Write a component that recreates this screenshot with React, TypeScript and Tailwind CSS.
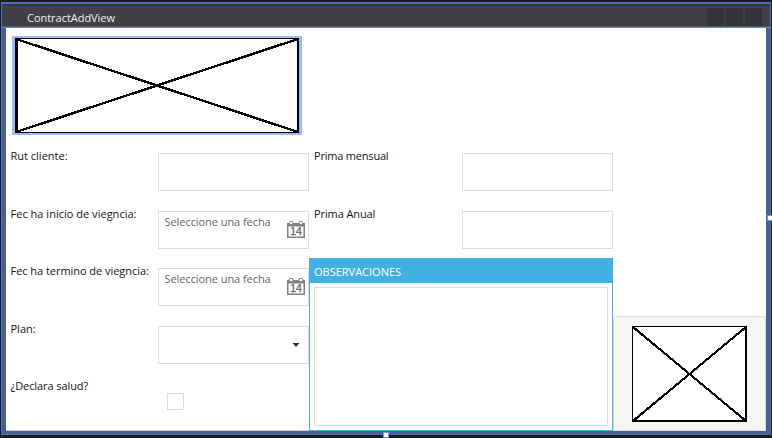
import type { ReactNode } from "react";

function Label({ children, className = "pl-[4.5px]" }: { children: ReactNode; className?: string }) {
  return (
    <div className={`pt-[5px] text-[11px] leading-[15px] whitespace-nowrap text-[#141414] ${className}`}>
      {children}
    </div>
  );
}

function Field({ children }: { children?: ReactNode }) {
  return (
    <div className="mt-[10px] flex h-[38px] w-[151px] justify-between border border-[#dddddd] bg-white">
      {children}
    </div>
  );
}

function CalendarIcon() {
  return (
    <svg width="18" height="18" viewBox="0 0 18 18" className="mt-[9px] mr-[3px] shrink-0">
      <path d="M.75 4V16.25H17.25V4" fill="white" stroke="#808080" strokeWidth="1.5" />
      <path d="M0 2H18V5.5H0Z" fill="#808080" />
      <rect x="2.5" y=".5" width="3.5" height="3" rx="1" fill="white" stroke="#808080" />
      <rect x="12" y=".5" width="3.5" height="3" rx="1" fill="white" stroke="#808080" />
      <text x="9" y="14.2" textAnchor="middle" fontSize="10.5" fill="#666666" stroke="#666666" strokeWidth=".3" fontFamily="Liberation Sans, sans-serif">14</text>
    </svg>
  );
}

function DateField() {
  return (
    <Field>
      <span className="pt-[2px] pl-[5.5px] text-[11px] leading-[15px] tracking-[-0.06px] whitespace-nowrap text-[#666666]">
        Seleccione una fecha
      </span>
      <CalendarIcon />
    </Field>
  );
}

export default function App() {
  return (
    <div className="h-[438px] w-[772px] overflow-hidden bg-[#1b1b1e] pt-[2px] pl-px font-['Open_Sans','Noto_Sans',sans-serif]">
      <div className="relative h-[433px] w-[770px] border border-t-2 border-[#4a72ba] bg-[#4a5f91]">
        <header className="flex h-[22px] items-start justify-between border-t-2 border-[#38383d] bg-[#404045] pr-[8px] pl-[25px]">
          <h1 className="pt-[4px] text-[11px] leading-[15px] tracking-[-0.03px] whitespace-nowrap text-[#f0f0f0]">ContractAddView</h1>
          <div className="flex gap-[2px] pt-[2px]">
            <i className="h-[18px] w-[17px] bg-[#333338]" />
            <i className="h-[18px] w-[17px] bg-[#333338]" />
            <i className="h-[18px] w-[17px] bg-[#333338]" />
          </div>
        </header>
        <div className="h-[2px] border-b border-[#7188b2] bg-[#4b5875]" />

        <main className="ml-[4px] grid h-[403px] w-[760px] grid-cols-[152px_151px_153px_151px_153px] grid-rows-[115px_58px_57px_58px_57px_58px] border-b border-[#c5cfe0] bg-white">
          <div className="col-span-5 pt-2 pl-[6px]">
            <svg width="290" height="99" className="block" shapeRendering="crispEdges">
              <rect width="290" height="99" fill="#9dbbf5" />
              <rect x="3" y="2" width="284" height="95" fill="black" />
              <rect x="6" y="3" width="279" height="93" fill="white" />
              <path d="M4 3L286 96M286 3L4 96" stroke="black" strokeWidth="2.4" />
            </svg>
          </div>

          <Label>Rut cliente:</Label>
          <Field />
          <Label className="pl-[5px] tracking-[-0.2px]">Prima mensual</Label>
          <Field />
          <div />

          <Label className="pl-[4.5px] tracking-[0.02px]">Fec ha inicio de viegncia:</Label>
          <DateField />
          <Label className="pl-[5px] tracking-[-0.1px]">Prima Anual</Label>
          <Field />
          <div />

          <Label className="pl-[4.5px] tracking-[-0.04px]">Fec ha termino de viegncia:</Label>
          <DateField />
          <section className="col-span-2 row-span-3 flex flex-col border border-[#45b2e2] bg-white">
            <h2 className="h-6 bg-[#41b1e1] pt-[5px] pl-1 text-[11px] leading-[15px] text-white">OBSERVACIONES</h2>
            <div className="mx-1 mt-1 h-[139px] border border-[#dddddd]" />
          </section>
          <div />

          <Label>Plan:</Label>
          <Field>
            <span />
            <svg width="8" height="5" viewBox="0 0 8 5" className="mt-[16px] mr-[8px]">
              <path d="M.5 0H7.5L4 4Z" fill="#333333" />
            </svg>
          </Field>
          <div className="row-span-2 flex rounded-t-[3px] border border-[#dddddd] bg-[#f6f6f6] pt-[9px] pl-[18px]">
            <svg width="115" height="96" shapeRendering="crispEdges">
              <rect width="115" height="96" fill="black" />
              <rect x="1" y="1" width="112" height="93" fill="white" />
              <path d="M1 1L114 95M114 1L1 95" stroke="black" strokeWidth="2.2" />
            </svg>
          </div>

          <Label className="pl-[4.5px] tracking-[-0.08px]">¿Declara salud?</Label>
          <div className="pt-5 pl-[9px]">
            <div className="size-[17px] border border-[#dddddd]" />
          </div>
        </main>

        <i className="absolute top-[211px] -right-[3px] size-[6px] border border-[#6a98f0] bg-white" />
        <i className="absolute -bottom-[4px] left-[381px] size-[6px] border border-[#6a98f0] bg-white" />
      </div>
    </div>
  );
}
